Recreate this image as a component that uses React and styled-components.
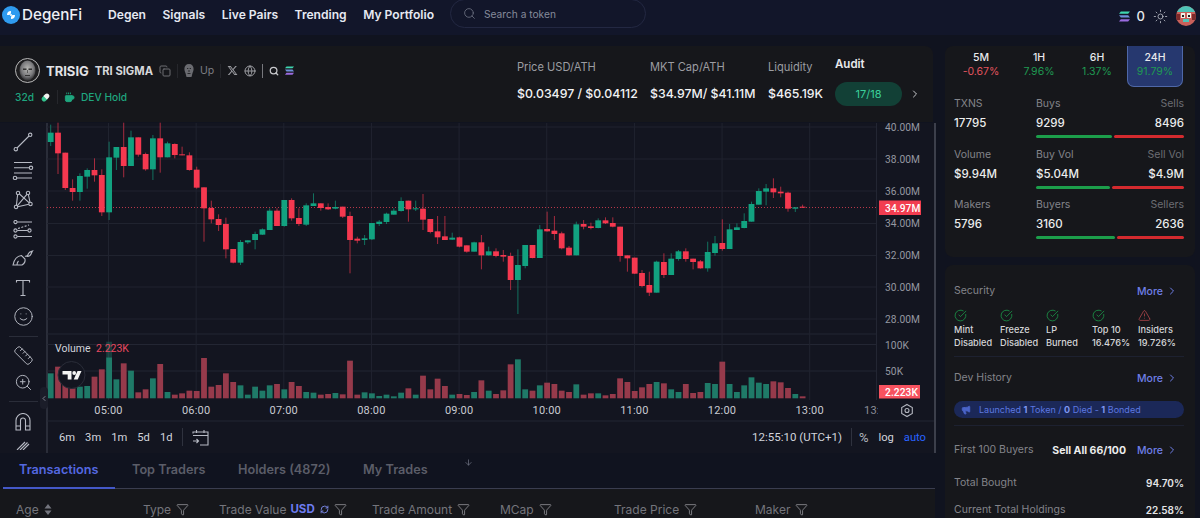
import React from "react";
import styled, { createGlobalStyle } from "styled-components";
import {
  Copy,
  Search,
  Globe,
  Sun,
  CircleCheckBig,
  TriangleAlert,
  ChevronRight,
  ChevronLeft,
  Funnel,
  Smile,
  ZoomIn,
  Ruler,
  RefreshCw,
  ArrowDown,
  Coffee,
  Megaphone,
} from "lucide-react";
import { FaXTwitter } from "react-icons/fa6";

const Global = createGlobalStyle`
  html, body { margin: 0; padding: 0; background: #10131f; }
  body { font-family: Inter, "Noto Sans", sans-serif; overflow: hidden; }
  * { box-sizing: border-box; }
`;

// candles: colour, body top, body bottom, wick top, wick bottom (measured at 3x, y origin 120)
const CANDLES = [
  ["g",38,66,14,78],["r",38,100,8,162],["r",98,204,98,210],["r",204,216,178,242],["g",168,216,160,242],
  ["g",150,170,145,206],["r",150,166,115,185],["r",165,277,148,288],["g",112,277,65,300],["g",81,113,81,150],
  ["r",81,138,8,172],["g",52,138,32,138],["r",52,104,52,110],["r",102,148,98,152],["g",55,148,45,180],
  ["r",55,112,8,158],["g",70,112,65,112],["r",72,105,70,115],["r",103,106,80,106],["r",106,150,97,152],
  ["r",149,203,140,206],["r",202,265,202,365],["r",264,298,242,310],["r",297,315,283,333],["r",312,388,293,415],
  ["r",387,428,387,430],["g",366,428,360,435],["g",361,367,361,372],["g",342,360,335,388],["g",328,344,325,345],
  ["g",272,330,265,330],["r",272,318,265,318],["g",240,318,240,320],["r",240,295,235,302],["r",294,312,265,318],
  ["g",256,314,250,318],["g",250,258,220,258],["r",250,264,250,272],["r",261,268,250,270],["g",261,266,242,268],
  ["r",260,290,260,294],["r",288,360,275,460],["r",356,362,350,370],["g",355,360,345,375],["g",309,358,309,360],
  ["g",305,312,300,318],["g",281,306,278,312],["g",272,284,265,284],["g",243,273,232,275],["r",242,268,242,305],
  ["g",265,268,242,273],["r",266,299,222,330],["r",297,336,297,340],["r",334,352,288,372],["r",349,360,288,360],
  ["g",353,359,338,360],["r",352,380,350,382],["r",376,395,376,398],["g",367,395,365,395],["r",367,406,345,448],
  ["g",394,406,380,407],["r",394,408,385,412],["r",405,410,390,425],["r",408,480,398,510],["g",435,480,388,582],
  ["g",375,438,375,445],["r",375,414,375,415],["g",328,414,315,414],["r",327,334,275,335],["r",332,342,288,360],
  ["r",340,385,335,388],["r",383,406,378,407],["g",313,406,305,406],["r",312,320,300,328],["r",319,324,308,328],
  ["g",301,324,295,325],["r",301,310,292,312],["r",309,320,292,322],["r",320,408,320,425],["r",406,415,406,455],
  ["r",413,461,413,462],["r",459,498,450,502],["r",495,518,455,528],["g",425,518,422,518],["r",426,465,400,474],
  ["g",416,465,400,465],["g",394,417,390,422],["r",394,417,385,425],["r",416,426,416,448],["r",424,445,420,446],
  ["g",396,445,365,455],["g",370,399,348,407],["r",369,387,298,392],["g",328,387,312,387],["g",322,330,310,330],
  ["g",303,324,280,325],["g",252,305,245,305],["g",213,254,205,254],["g",205,215,192,256],["r",205,217,175,234],
  ["r",215,220,200,232],["r",218,266,215,275],["g",262,266,262,276],["r",260,262,254,264],
];

// top of each volume bar at 3x, y origin 320
const VOLUMES = [
  160,140,195,205,200,198,170,148,112,178,130,152,217,208,175,132,216,224,220,212,213,114,200,195,160,186,
  196,224,200,212,196,192,208,186,198,216,218,224,222,219,223,122,224,217,220,228,224,229,218,205,224,167,
  208,176,198,224,222,225,216,181,212,222,211,133,118,208,212,196,188,192,212,216,193,224,220,220,226,222,
  175,186,213,202,192,186,190,208,216,192,219,216,189,192,125,192,216,196,172,188,192,184,187,204,222,229,
];

const HOURS = ["05:00","06:00","07:00","08:00","09:00","10:00","11:00","12:00","13:00"];
const PRICES = [["40.00M",127],["38.00M",159],["36.00M",191],["34.00M",223.5],["32.00M",255.5],["30.00M",287],["28.00M",319]];

const candleX = (i) => 50.7 + i * 7.3;
const hourX = (i) => 108.5 + i * 87.65;

const SolanaMark = ({ size = 10 }) => (
  <svg width={size} height={size} viewBox="0 0 12 12">
    <polygon points="2,0.5 12,0.5 10,3 0,3" fill="#3fd6b0" />
    <polygon points="0,4.7 10,4.7 12,7.2 2,7.2" fill="#6f8fd8" />
    <polygon points="2,9 12,9 10,11.5 0,11.5" fill="#9a6be0" />
  </svg>
);

const DegenLogo = () => (
  <svg width="18" height="18" viewBox="0 0 18 18">
    <circle cx="9" cy="9" r="9" fill="#2f9bf0" />
    <path d="M5 9a4 4 0 0 1 4-4v2.600A1.500 1.500 0 0 0 7.600 9z" fill="#fff" />
    <path d="M13 9a4 4 0 0 1-4 4v-2.600A1.500 1.500 0 0 0 10.400 9z" fill="#fff" />
    <circle cx="9" cy="9" r="1" fill="#fff" />
  </svg>
);

const UserAvatar = () => (
  <svg width="20" height="20" viewBox="0 0 20 20">
    <clipPath id="ua"><circle cx="10" cy="10" r="10" /></clipPath>
    <g clipPath="url(#ua)">
      <rect width="20" height="20" fill="#c9605a" />
      <rect width="20" height="6" fill="#4fc4b8" />
      <rect x="0" y="8" width="4" height="6" fill="#7c2a2a" />
      <rect x="16" y="8" width="4" height="6" fill="#7c2a2a" />
      <rect x="5" y="7" width="4" height="5" fill="#f2efe6" />
      <rect x="11" y="7" width="4" height="5" fill="#f2efe6" />
      <rect x="6" y="9" width="2" height="2" fill="#222" />
      <rect x="12" y="9" width="2" height="2" fill="#222" />
      <rect x="7" y="13" width="6" height="3" fill="#4fc4b8" />
    </g>
  </svg>
);

const TokenLogo = () => (
  <svg width="25" height="25" viewBox="0 0 25 25">
    <defs>
      <radialGradient id="tf" cx="50%" cy="42%" r="55%">
        <stop offset="0%" stopColor="#b9b9b6" />
        <stop offset="70%" stopColor="#77777a" />
        <stop offset="100%" stopColor="#3a3a3c" />
      </radialGradient>
    </defs>
    <circle cx="12.500" cy="12.500" r="12" fill="#1e1e20" stroke="#c9c9c9" strokeWidth="0.900" />
    <ellipse cx="12.500" cy="12.500" rx="8" ry="10" fill="url(#tf)" />
    <rect x="8" y="10.500" width="3.500" height="1.400" fill="#2a2a2a" />
    <rect x="13.500" y="10.500" width="3.500" height="1.400" fill="#2a2a2a" />
    <path d="M12.500 12v3" stroke="#4a4a4a" strokeWidth=".8" />
    <rect x="10" y="17" width="5" height="1" fill="#333" />
  </svg>
);

const LionMark = () => (
  <svg width="10" height="14" viewBox="0 0 10 14" fill="#6a6b70">
    <path d="M5 0c3 0 4.600 2 4.600 5 0 2-.8 3-1.200 4.500L7.500 13h-5l-.9-3.500C1.200 8 .4 7 .4 5 .4 2 2 0 5 0z" />
    <path d="M3 4.500h1.300M5.700 4.500H7M5 6v2M3.500 9.500h3" stroke="#16171b" strokeWidth=".8" fill="none" />
  </svg>
);

const PillMark = () => (
  <svg width="11" height="11" viewBox="0 0 11 11">
    <g transform="rotate(-45 5.500 5.500)">
      <path d="M5.500 3H3a2.500 2.500 0 0 0 0 5h2.500z" fill="#34c48f" transform="translate(0.500 0)" />
      <path d="M5.500 3H8a2.500 2.500 0 0 1 0 5H5.500z" fill="#f1f3f1" transform="translate(-0.500 0)" />
    </g>
  </svg>
);

const LineTool = () => (
  <ToolSvg width="20" height="20" viewBox="0 0 20 20">
    <circle cx="2.800" cy="17.200" r="1.700" />
    <circle cx="17.200" cy="2.800" r="1.700" />
    <path d="M4 16 16 4" />
  </ToolSvg>
);
const FibTool = () => (
  <ToolSvg width="22" height="19" viewBox="0 0 22 19">
    <path d="M2 1.500h18M2 6.800h15M2 12h18M5 17h15" />
    <circle cx="19" cy="6.800" r="1.700" />
    <circle cx="3" cy="17" r="1.700" />
  </ToolSvg>
);
const PatternTool = () => (
  <ToolSvg width="20" height="20" viewBox="0 0 20 20">
    <circle cx="5" cy="3" r="1.700" />
    <circle cx="15" cy="3" r="1.700" />
    <circle cx="3" cy="17" r="1.700" />
    <circle cx="17.500" cy="14" r="1.700" />
    <path d="M4.600 4.700 3.400 15.300M6.500 4l9.800 8.800M15.400 4.700l1.600 7.700M13.900 4.300 4.200 15.800M4.700 16.700 15.800 14.300" />
  </ToolSvg>
);
const ForecastTool = () => (
  <ToolSvg width="20" height="19" viewBox="0 0 20 19">
    <circle cx="2.500" cy="2" r="1.600" />
    <circle cx="2.500" cy="10.500" r="1.600" />
    <circle cx="2.500" cy="16.500" r="1.600" />
    <circle cx="16.500" cy="10.500" r="1.600" />
    <path d="M4.300 2H19M4.300 10.500h10.500M4.300 16.500H19" />
    <path d="M5 8.500 16 5" strokeDasharray="2 1.500" />
  </ToolSvg>
);
const BrushTool = () => (
  <ToolSvg width="22" height="16" viewBox="0 0 22 16">
    <path d="M1 15h9c2.500-1.500 3.500-3.500 3-6L9.500 5.500C5 6 2 10 1 15z" />
    <path d="M5 15c0-1.500.5-3 1.500-4M13 6c2 1 3-1 3.500-2.500.5-1 2-2 4-2.500-1 1.500-1 3-2.500 4.500-1.500 1-3 1-4 .5" />
  </ToolSvg>
);
const TextTool = () => (
  <ToolSvg width="18" height="18" viewBox="0 0 18 18">
    <path d="M2.500 3.500V1.500h13v2M9 1.500v15M6.500 16.500h5" />
  </ToolSvg>
);
const MagnetTool = () => (
  <ToolSvg width="16" height="18" viewBox="0 0 16 18">
    <path d="M1 17V7.500a7 7 0 0 1 14 0V17h-4.500V7.500a2.500 2.500 0 0 0-5 0V17zM1 13h4.500M10.500 13H15" />
  </ToolSvg>
);
const StayTool = () => (
  <ToolSvg width="14" height="9" viewBox="0 0 14 9">
    <path d="M1 9 9 1M4 9l7.500-7.500M7 9l6-6" />
  </ToolSvg>
);
const CalendarGo = () => (
  <ToolSvg width="17" height="17" viewBox="0 0 17 17">
    <path d="M4.500 1v3M12 1v3M1 4.500V3h15v13H8M1 6.500h15M1 12h5M4.500 10l2 2-2 2" />
  </ToolSvg>
);
const SortIcon = () => (
  <svg width="8" height="11" viewBox="0 0 8 11" fill="#73757e">
    <path d="M4 0 7.500 4.500h-7zM4 11 .5 6.500h7z" />
  </svg>
);

const Chart = () => (
  <ChartSvg width="887" height="298" viewBox="47 123 887 298">
    {PRICES.map(([, y]) => (
      <path key={y} d={`M47 ${y}H876`} stroke="#20232f" />
    ))}
    <path d="M47 334H876M47 344.500H876M47 371H876M47 421H934" stroke="#232633" />
    <path d="M876.500 123V400" stroke="#232633" />
    {HOURS.map((h, i) => (
      <path key={h} d={`M${hourX(i)} 123V400`} stroke="#20232f" />
    ))}
    {VOLUMES.map((top, i) => {
      const x = candleX(i) - 2.900;
      const y = 320 + top / 3;
      const colour = CANDLES[i][0] === "g" ? "#1f7a68" : "#963a4b";
      return <rect key={i} x={x} y={y} width="5.800" height={398.300 - y} fill={colour} />;
    })}
    <rect x={candleX(8) - 2.900} y="341.700" width="5.800" height="15.600" fill="#1f7a68" opacity=".4" />
    <path d="M47 207.500H876" stroke="#b8384a" strokeDasharray="1 2" />
    {CANDLES.map(([c, bt, bb, wt, wb], i) => {
      const x = candleX(i);
      const colour = c === "g" ? "#12a280" : "#f5384f";
      return (
        <g key={i} fill={colour}>
          <rect x={x - 0.500} y={120 + wt / 3} width="1" height={(wb - wt) / 3} opacity=".65" />
          <rect x={x - 2.900} y={120 + bt / 3} width="5.800" height={Math.max((bb - bt) / 3, 1)} />
        </g>
      );
    })}
    {PRICES.map(([label, y]) => (
      <AxisText key={label} x="885" y={y + 3.500}>{label}</AxisText>
    ))}
    <AxisText x="885" y="348.500">100K</AxisText>
    <AxisText x="885" y="374.500">50K</AxisText>
    <rect x="879" y="200.500" width="42" height="14.500" fill="#f23d50" />
    <TagText x="885" y="211.500">34.97M</TagText>
    <rect x="879" y="385" width="41" height="13.500" fill="#f7525f" />
    <TagText x="885" y="395.500">2.223K</TagText>
    {HOURS.map((h, i) => (
      <TimeText key={h} x={hourX(i)} y="414" textAnchor="middle">{h}</TimeText>
    ))}
    <svg x="864" y="404" width="14" height="14">
      <TimeText x="0" y="10" $dim>13:00</TimeText>
    </svg>
    <path d="M907 404.500 912.300 407.500V413.500L907 416.500 901.700 413.500V407.500Z" fill="none" stroke="#b2b5be" strokeWidth="1.100" />
    <circle cx="907" cy="410.500" r="2" fill="none" stroke="#b2b5be" strokeWidth="1.100" />
    <LegendText x="55" y="351.500">Volume</LegendText>
    <LegendText x="96" y="351.500" $red>2.223K</LegendText>
    <circle cx="71.500" cy="375" r="13.500" fill="#131520" stroke="#2a2d39" />
    <g fill="#f4f4f4" transform="translate(62.500 371)">
      <path d="M0 0h9v8.500H5.200V3.600H0z" />
      <circle cx="11.700" cy="2" r="1.900" />
      <path d="M15 0h4l-3.800 8.500h-4z" />
    </g>
  </ChartSvg>
);

const TOOLS_TOP = [LineTool, FibTool, PatternTool, ForecastTool, BrushTool, TextTool];

const STATS = [
  { a: "TXNS", av: "17795", b: "Buys", bv: "9299", c: "Sells", cv: "8496", g: 52 },
  { a: "Volume", av: "$9.94M", b: "Buy Vol", bv: "$5.04M", c: "Sell Vol", cv: "$4.9M", g: 50.700 },
  { a: "Makers", av: "5796", b: "Buyers", bv: "3160", c: "Sellers", cv: "2636", g: 54.300 },
];

const PERIODS = [
  { t: "5M", v: "-0.67%", red: true },
  { t: "1H", v: "7.96%" },
  { t: "6H", v: "1.37%" },
  { t: "24H", v: "91.79%", on: true },
];

const SECURITY = [
  { a: "Mint", b: "Disabled" },
  { a: "Freeze", b: "Disabled" },
  { a: "LP", b: "Burned" },
  { a: "Top 10", b: "16.476%" },
  { a: "Insiders", b: "19.726%", warn: true },
];

const COLUMNS = [
  { w: 127, label: "Age", sort: true },
  { w: 76, label: "Type", filter: true },
  { w: 153, label: "Trade Value", usd: true, filter: true },
  { w: 128, label: "Trade Amount", filter: true },
  { w: 114, label: "MCap", filter: true },
  { w: 141, label: "Trade Price", filter: true },
  { w: 100, label: "Maker", filter: true },
];

export default function App() {
  return (
    <Page>
      <Global />
      <Header>
        <Brand>
          <DegenLogo />
          <BrandName>DegenFi</BrandName>
        </Brand>
        <Nav>
          <NavLink>Degen</NavLink>
          <NavLink>Signals</NavLink>
          <NavLink>Live Pairs</NavLink>
          <NavLink>Trending</NavLink>
          <NavLink>My Portfolio</NavLink>
        </Nav>
        <SearchBox>
          <Search size={13} color="#6f7484" strokeWidth={1.500} />
          <SearchText>Search a token</SearchText>
        </SearchBox>
        <HeaderRight>
          <SolanaMark size={11} />
          <Balance>0</Balance>
          <ThemeIcon size={15} color="#c9ccd6" strokeWidth={1.200} />
          <UserAvatar />
        </HeaderRight>
      </Header>

      <Body>
        <Main>
          <TokenCard>
            <TokenInfo>
              <NameRow>
                <TokenLogo />
                <Symbol>TRISIG</Symbol>
                <FullName>TRI SIGMA</FullName>
                <Copy size={12} color="#6d6e73" />
                <Divider />
                <LionMark />
                <UpText>Up</UpText>
                <Divider />
                <FaXTwitter size={11} color="#9a9ba0" />
                <Globe size={12} color="#9a9ba0" />
                <Divider $bright />
                <Search size={10} color="#c8c9cd" strokeWidth={3} />
                <SolanaMark size={9} />
              </NameRow>
              <TagRow>
                <GreenText>32d</GreenText>
                <PillMark />
                <Divider />
                <Coffee size={11} color="#1fa67f" fill="#1fa67f" />
                <GreenText>DEV Hold</GreenText>
              </TagRow>
            </TokenInfo>
            <StatCol $w={133}>
              <StatLabel>Price USD/ATH</StatLabel>
              <StatValue>$0.03497 / $0.04112</StatValue>
            </StatCol>
            <StatCol $w={118}>
              <StatLabel>MKT Cap/ATH</StatLabel>
              <StatValue>$34.97M/ $41.11M</StatValue>
            </StatCol>
            <StatCol $w={67}>
              <StatLabel>Liquidity</StatLabel>
              <StatValue>$465.19K</StatValue>
            </StatCol>
            <AuditCol>
              <AuditLabel>Audit</AuditLabel>
              <AuditRow>
                <AuditPill>17/18</AuditPill>
                <ChevronRight size={12} color="#c8c9cd" />
              </AuditRow>
            </AuditCol>
          </TokenCard>

          <ChartBox>
            <Toolbar>
              {TOOLS_TOP.map((Tool, i) => (
                <ToolSlot key={i}><Tool /></ToolSlot>
              ))}
              <ToolSlot><Smile size={21} color="#b7bac4" strokeWidth={1.100} /></ToolSlot>
              <ToolRule />
              <ToolSlot $h={27}><Ruler size={21} color="#b7bac4" strokeWidth={1.100} /></ToolSlot>
              <ToolSlot $h={27}><ZoomIn size={19} color="#b7bac4" strokeWidth={1.200} /></ToolSlot>
              <ToolRule />
              <ToolSlot $h={29}><MagnetTool /></ToolSlot>
              <ToolSlot $h={18}><StayTool /></ToolSlot>
            </Toolbar>
            <Collapse><ChevronLeft size={9} color="#b7bac4" /></Collapse>
            <ChartArea>
              <Chart />
              <RangeBar>
                <Range>6m</Range>
                <Range>3m</Range>
                <Range>1m</Range>
                <Range>5d</Range>
                <Range>1d</Range>
                <RangeRule />
                <CalendarGo />
                <Clock>12:55:10 (UTC+1)</Clock>
                <RangeRule />
                <Percent>%</Percent>
                <Range>log</Range>
                <AutoText>auto</AutoText>
              </RangeBar>
            </ChartArea>
          </ChartBox>

          <Tabs>
            <DownHint><ArrowDown size={9} color="#6c7080" /></DownHint>
            <Tab $on $w={112}>Transactions</Tab>
            <Tab $w={106}>Top Traders</Tab>
            <Tab $w={125}>Holders (4872)</Tab>
            <Tab $w={90}>My Trades</Tab>
          </Tabs>
          <TableHead>
            {COLUMNS.map((col) => (
              <HeadCell key={col.label} $w={col.w}>
                <span>{col.label}</span>
                {col.usd && <UsdText>USD</UsdText>}
                {col.usd && <RefreshCw size={9} color="#7f8df0" strokeWidth={2.400} />}
                {col.sort && <SortIcon />}
                {col.filter && <Funnel size={13} color="#9a9ba0" strokeWidth={1.400} />}
              </HeadCell>
            ))}
          </TableHead>
        </Main>

        <Side>
          <StatsCard>
            <Periods>
              {PERIODS.map((p) => (
                <Period key={p.t} $on={p.on}>
                  <PeriodName>{p.t}</PeriodName>
                  <PeriodValue $red={p.red}>{p.v}</PeriodValue>
                </Period>
              ))}
            </Periods>
            {STATS.map((s) => (
              <StatsRow key={s.a}>
                <div>
                  <MiniLabel>{s.a}</MiniLabel>
                  <MiniValue>{s.av}</MiniValue>
                </div>
                <div>
                  <SplitRow>
                    <MiniLabel>{s.b}</MiniLabel>
                    <MiniLabel $dim>{s.c}</MiniLabel>
                  </SplitRow>
                  <SplitRow>
                    <MiniValue>{s.bv}</MiniValue>
                    <MiniValue>{s.cv}</MiniValue>
                  </SplitRow>
                  <Bars>
                    <BarPart $w={s.g} $colour="#1c9e4b" />
                    <BarPart $w={100 - s.g} $colour="#d32a2e" />
                  </Bars>
                </div>
              </StatsRow>
            ))}
          </StatsCard>

          <InfoCard>
            <SectionHead>
              <MiniLabel>Security</MiniLabel>
              <MoreLink>More <ChevronRight size={12} /></MoreLink>
            </SectionHead>
            <SecurityGrid>
              {SECURITY.map((s) => (
                <SecurityItem key={s.a}>
                  {s.warn ? (
                    <TriangleAlert size={13} color="#b8484c" strokeWidth={1.400} />
                  ) : (
                    <CircleCheckBig size={13} color="#1c9e4b" strokeWidth={1.400} />
                  )}
                  <SecurityText>{s.a}</SecurityText>
                  <SecurityText>{s.b}</SecurityText>
                </SecurityItem>
              ))}
            </SecurityGrid>
            <Rule $top={7} />
            <SectionHead $top={14}>
              <MiniLabel>Dev History</MiniLabel>
              <MoreLink>More <ChevronRight size={12} /></MoreLink>
            </SectionHead>
            <DevPill>
              <Megaphone size={10} color="#4a64c8" fill="#4a64c8" />
              <span>Launched <b>1</b> Token / <b>0</b> Died - <b>1</b> Bonded</span>
            </DevPill>
            <Rule $top={7} />
            <SectionHead $top={17}>
              <MiniLabel>First 100 Buyers</MiniLabel>
              <SellAll>Sell All 66/100</SellAll>
              <MoreLink>More <ChevronRight size={12} /></MoreLink>
            </SectionHead>
            <SectionHead $top={19}>
              <MiniLabel>Total Bought</MiniLabel>
              <TotalValue>94.70%</TotalValue>
            </SectionHead>
            <SectionHead $top={13}>
              <MiniLabel>Current Total Holdings</MiniLabel>
              <TotalValue>22.58%</TotalValue>
            </SectionHead>
          </InfoCard>
        </Side>
      </Body>
    </Page>
  );
}

const Page = styled.div`
  width: 1200px;
  height: 518px;
  overflow: hidden;
  background: #10131f;
  color: #e8e9ec;
`;

const Header = styled.header`
  display: flex;
  align-items: flex-start;
  height: 35px;
  background: #12162a;
`;

const Brand = styled.div`
  display: flex;
  align-items: center;
  gap: 2px;
  width: 108px;
  height: 29px;
  padding-left: 2px;
`;

const BrandName = styled.span`
  font-size: 15.2px;
  font-weight: 500;
  color: #eef0f5;
`;

const Nav = styled.nav`
  display: flex;
  align-items: center;
  gap: 16.5px;
  height: 29px;
  width: 342px;
`;

const NavLink = styled.a`
  font-size: 12.1px;
  font-weight: 600;
  color: #e6e9f2;
`;

const SearchBox = styled.div`
  display: flex;
  align-items: center;
  gap: 8px;
  width: 196px;
  height: 29px;
  margin-top: -1px;
  padding-left: 12px;
  border: 1px solid #232842;
  border-radius: 15px;
`;

const SearchText = styled.span`
  font-size: 10.2px;
  color: #868b9b;
`;

const HeaderRight = styled.div`
  display: flex;
  align-items: center;
  height: 32px;
  margin-left: auto;
  padding-right: 4px;
  gap: 5px;
`;

const Balance = styled.span`
  font-size: 13px;
  font-weight: 500;
  margin: 0 3px 0 2px;
`;

const ThemeIcon = styled(Sun)`
  margin-right: 3px;
`;

const Body = styled.div`
  display: flex;
  height: 483px;
`;

const Main = styled.div`
  width: 935px;
  display: flex;
  flex-direction: column;
`;

const TokenCard = styled.section`
  display: flex;
  width: 933px;
  height: 76px;
  margin-top: 11px;
  background: #16171b;
  border-radius: 0 8px 0 0;
`;

const TokenInfo = styled.div`
  width: 517px;
  padding: 12px 0 0 15px;
`;

const NameRow = styled.div`
  display: flex;
  align-items: center;
  gap: 6px;
  height: 25px;
`;

const Symbol = styled.span`
  font-size: 13px;
  font-weight: 700;
  color: #e2e3e6;
`;

const FullName = styled.span`
  font-size: 11.2px;
  font-weight: 700;
  color: #d6d7da;
  white-space: nowrap;
`;

const Divider = styled.i`
  width: 1px;
  height: 14px;
  background: ${(p) => (p.$bright ? "#77787d" : "#26272c")};
`;

const UpText = styled.span`
  font-size: 10.5px;
  color: #7d7e83;
`;

const TagRow = styled.div`
  display: flex;
  align-items: center;
  gap: 6px;
  height: 14px;
  margin-top: 7px;
`;

const GreenText = styled.span`
  font-size: 10.2px;
  font-weight: 500;
  color: #1fa67f;
`;

const StatCol = styled.div`
  width: ${(p) => p.$w}px;
  padding-top: 14px;
`;

const StatLabel = styled.div`
  font-size: 11.1px;
  line-height: 14px;
  color: #9c9da2;
`;

const StatValue = styled.div`
  margin-top: 11px;
  font-size: 12.3px;
  font-weight: 500;
  line-height: 18px;
  white-space: nowrap;
  color: #f1f2f4;
`;

const AuditCol = styled.div`
  padding-top: 11px;
`;

const AuditLabel = styled.div`
  font-size: 11.5px;
  font-weight: 600;
  line-height: 14px;
  color: #e8e9ec;
`;

const AuditRow = styled.div`
  display: flex;
  align-items: center;
  gap: 7px;
  margin-top: 11px;
`;

const AuditPill = styled.div`
  width: 67px;
  height: 24px;
  border-radius: 12px;
  background: #124036;
  color: #3bd09b;
  font-size: 11px;
  line-height: 24px;
  text-align: center;
`;

const ChartBox = styled.section`
  position: relative;
  display: flex;
  height: 330px;
  margin-top: 1px;
  background: #131520;
`;

const Toolbar = styled.aside`
  display: flex;
  flex-direction: column;
  align-items: center;
  flex: none;
  width: 46px;
  height: 330px;
  padding-top: 4px;
  overflow: hidden;
`;

const ToolSlot = styled.div`
  display: flex;
  align-items: center;
  justify-content: center;
  flex: none;
  height: ${(p) => p.$h || 29.2}px;
`;

const ToolSvg = styled.svg`
  fill: none;
  stroke: #b7bac4;
  stroke-width: 1.1;
`;

const ToolRule = styled.hr`
  flex: none;
  width: 29px;
  height: 1px;
  margin: 5px 0;
  border: 0;
  background: #2a2d39;
`;

const Collapse = styled.div`
  position: absolute;
  left: 40px;
  top: 264px;
  display: flex;
  align-items: center;
  justify-content: center;
  width: 8px;
  height: 22px;
  border-radius: 4px;
  background: #1b1d29;
`;

const ChartArea = styled.div`
  display: flex;
  flex-direction: column;
  flex: 1;
  border-left: 2px solid #2a2d39;
  border-right: 2px solid #3c3f4b;
`;

const ChartSvg = styled.svg`
  display: block;
  flex: none;
  margin-left: -1px;
  overflow: visible;
`;

const AxisText = styled.text`
  font-family: Roboto, sans-serif;
  font-size: 10.2px;
  letter-spacing: 0.1px;
  fill: #9598a1;
`;

const TagText = styled.text`
  font-family: Roboto, sans-serif;
  font-size: 10.2px;
  font-weight: 500;
  letter-spacing: 0.1px;
  fill: #fff;
`;

const TimeText = styled.text`
  font-family: Roboto, sans-serif;
  font-size: 11px;
  letter-spacing: 0.2px;
  fill: ${(p) => (p.$dim ? "#8b8e97" : "#c8cad1")};
`;

const LegendText = styled.text`
  font-family: Roboto, sans-serif;
  font-size: 10.5px;
  fill: ${(p) => (p.$red ? "#e8485f" : "#d1d4dc")};
`;

const RangeBar = styled.div`
  display: flex;
  align-items: center;
  gap: 10px;
  height: 32px;
  padding: 0 8px 0 11px;
`;

const Range = styled.span`
  font-family: Roboto, sans-serif;
  font-size: 11.2px;
  color: #d1d4dc;
`;

const RangeRule = styled.i`
  width: 1px;
  height: 18px;
  margin: 0 -1px;
  background: #2f323e;
`;

const Clock = styled.span`
  margin-left: auto;
  font-family: Roboto, sans-serif;
  font-size: 11.5px;
  color: #d1d4dc;
`;

const Percent = styled.span`
  margin-left: -2px;
  font-family: Roboto, sans-serif;
  font-size: 13px;
  color: #b2b5be;
`;

const AutoText = styled(Range)`
  color: #2962ff;
`;

const Tabs = styled.nav`
  position: relative;
  display: flex;
  height: 36px;
  margin-left: 3px;
  border-bottom: 1px solid #3a3d4f;
`;

const DownHint = styled.div`
  position: absolute;
  left: 461px;
  top: -2px;
`;

const Tab = styled.div`
  flex: none;
  width: ${(p) => p.$w}px;
  height: 36px;
  padding: 9px 0 0 ${(p) => (p.$on ? 16 : 17)}px;
  font-size: 12.7px;
  font-weight: 600;
  line-height: 16px;
  white-space: nowrap;
  color: ${(p) => (p.$on ? "#5468e0" : "#5b5d68")};
  border-bottom: ${(p) => (p.$on ? "2px solid #4458c8" : "0")};
`;

const TableHead = styled.div`
  display: flex;
  flex: 1;
  padding: 12px 0 0 16px;
  background: #16171b;
`;

const HeadCell = styled.div`
  display: flex;
  align-items: center;
  flex: none;
  gap: 5px;
  width: ${(p) => p.$w}px;
  height: 16px;
  font-size: 12px;
  color: #74757c;
  white-space: nowrap;
`;

const UsdText = styled.b`
  margin-left: -1px;
  color: #6d7cf0;
  font-weight: 700;
  font-size: 11.5px;
`;

const Side = styled.aside`
  width: 250px;
  margin-left: 10px;
  display: flex;
  flex-direction: column;
`;

const StatsCard = styled.section`
  height: 211px;
  margin-top: 11px;
  background: #16171b;
  border-radius: 8px;
`;

const Periods = styled.div`
  display: grid;
  grid-template-columns: repeat(4, 56px);
  gap: 2px;
  margin: 0 0 10px 8px;
`;

const Period = styled.div`
  height: 41px;
  padding-top: 5px;
  text-align: center;
  border-radius: 0 0 7px 7px;
  background: ${(p) => (p.$on ? "#26386f" : "transparent")};
  border: ${(p) => (p.$on ? "1px solid #4f68a8" : "1px solid transparent")};
  border-top: 0;
`;

const PeriodName = styled.div`
  font-size: 10.5px;
  font-weight: 500;
  line-height: 14px;
  color: #e8e9ec;
`;

const PeriodValue = styled.div`
  font-size: 10.5px;
  line-height: 14px;
  color: ${(p) => (p.$red ? "#e0545e" : "#1f9a52")};
`;

const StatsRow = styled.div`
  display: grid;
  grid-template-columns: 82px 148px;
  height: 50.5px;
  padding-left: 9px;
`;

const SplitRow = styled.div`
  display: flex;
  justify-content: space-between;
`;

const MiniLabel = styled.div`
  font-size: 10.5px;
  line-height: 14px;
  color: ${(p) => (p.$dim ? "#6c6d73" : "#83848a")};
  white-space: nowrap;
`;

const MiniValue = styled.div`
  margin-top: 3px;
  font-size: 11.5px;
  font-weight: 500;
  line-height: 18px;
  color: #eceded;
`;

const Bars = styled.div`
  display: flex;
  gap: 2px;
  height: 3px;
  margin-top: 3px;
`;

const BarPart = styled.i`
  display: block;
  width: ${(p) => p.$w}%;
  border-radius: 2px;
  background: ${(p) => p.$colour};
`;

const InfoCard = styled.section`
  flex: 1;
  margin-top: 8px;
  padding: 19px 11px 0 9px;
  background: #16171b;
  border-radius: 8px 8px 0 0;
`;

const SectionHead = styled.div`
  display: flex;
  align-items: center;
  justify-content: space-between;
  height: 14px;
  margin-top: ${(p) => p.$top || 0}px;
`;

const MoreLink = styled.a`
  display: flex;
  align-items: center;
  gap: 3px;
  width: 47px;
  font-size: 10.5px;
  font-weight: 500;
  color: #6f7fe8;
`;

const SecurityGrid = styled.div`
  display: grid;
  grid-template-columns: repeat(5, 46px);
  margin-top: 11px;
`;

const SecurityItem = styled.div`
  display: flex;
  flex-direction: column;
  align-items: flex-start;
  svg {
    margin-bottom: 1px;
  }
`;

const SecurityText = styled.span`
  font-size: 9.2px;
  font-weight: 500;
  line-height: 13px;
  color: #d4d5d8;
  white-space: nowrap;
`;

const Rule = styled.hr`
  height: 1px;
  margin: ${(p) => p.$top}px 0 0;
  border: 0;
  background: #1d2130;
`;

const DevPill = styled.div`
  display: flex;
  align-items: center;
  gap: 8px;
  height: 17px;
  margin-top: 16px;
  padding-left: 7px;
  border-radius: 9px;
  background: #1b2858;
  font-size: 9px;
  color: #5d78e0;
  white-space: nowrap;
  b {
    font-weight: 700;
    color: #7f97f0;
  }
`;

const SellAll = styled.span`
  margin-left: auto;
  margin-right: 11px;
  font-size: 10.5px;
  font-weight: 700;
  color: #eceded;
`;

const TotalValue = styled.span`
  font-size: 10px;
  font-weight: 600;
  color: #e4e5e7;
`;
